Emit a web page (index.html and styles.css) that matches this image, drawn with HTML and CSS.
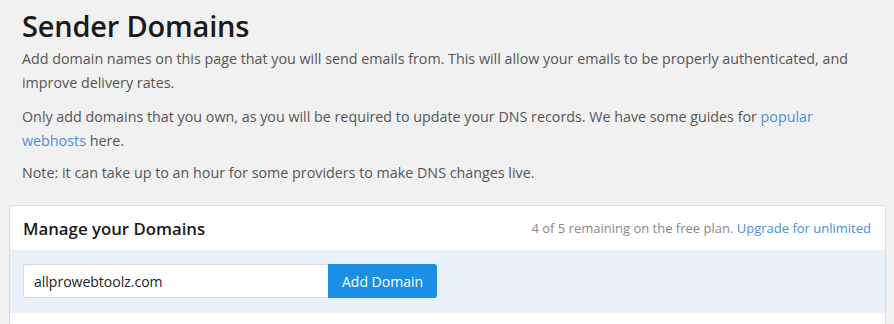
FILE: index.html
```html
<!DOCTYPE html>
<html>
<head>
<meta charset="utf-8">
<link rel="stylesheet" href="styles.css">
</head>
<body>
<div class="intro">
  <h1 class="title">Sender Domains</h1>
  <p class="text">Add domain names on this page that you will send emails from. This will allow your emails to be properly authenticated, and improve delivery rates.</p>
  <p class="text">Only add domains that you own, as you will be required to update your DNS records. We have some guides for <a class="link" href="#">popular webhosts</a> here.</p>
  <p class="text text-note">Note: it can take up to an hour for some providers to make DNS changes live.</p>
</div>
<div class="card">
  <div class="card-head">
    <h2 class="card-title">Manage your Domains</h2>
    <div class="quota">4 of 5 remaining on the free plan. <a class="link" href="#">Upgrade for unlimited</a></div>
  </div>
  <div class="card-form">
    <div class="field">
      <input class="input" type="text" value="allprowebtoolz.com">
      <button class="btn">Add Domain</button>
    </div>
  </div>
  <div class="card-rest"></div>
</div>
</body>
</html>
```
FILE: styles.css
```css
html, body {
  margin: 0;
  padding: 0;
}
body {
  background: #f1f1f1;
  font-family: "Open Sans", "DejaVu Sans", sans-serif;
  color: #555;
  padding: 0 8px 0 9px;
}
.intro {
  padding: 0 13px;
}
.title {
  margin: 0;
  padding-top: 6px;
  font-size: 29px;
  font-weight: 600;
  line-height: 40px;
  color: #1a1a1a;
  letter-spacing: -0.2px;
}
.text {
  margin: 0 0 10px;
  font-size: 14.3px;
  line-height: 24px;
  color: #555;
}
.text:first-of-type {
  margin-top: 1px;
}
.text-note {
  margin-top: -2px;
}
.link {
  color: #4a90d9;
  text-decoration: none;
}
.card {
  margin-top: 20px;
  background: #fff;
  border: 1px solid #dcdcdc;
  border-radius: 3px;
  overflow: hidden;
}
.card-head {
  display: flex;
  justify-content: space-between;
  align-items: center;
  height: 44px;
  padding: 0 14px 0 13px;
}
.card-title {
  margin: 0;
  font-size: 16.8px;
  font-weight: 600;
  color: #1a1a1a;
}
.quota {
  font-size: 13px;
  color: #888;
}
.card-form {
  background: #e9f2fb;
  padding: 14px 13px 15px;
}
.field {
  display: flex;
  height: 34px;
}
.input {
  box-sizing: border-box;
  width: 305px;
  height: 34px;
  margin: 0;
  border: 1px solid #d4dbe2;
  border-right: none;
  border-radius: 3px 0 0 3px;
  padding: 0 10px;
  font-family: "Open Sans", "DejaVu Sans", sans-serif;
  font-size: 14px;
  color: #222;
  background: #fff;
  outline: none;
}
.btn {
  box-sizing: border-box;
  width: 109px;
  height: 34px;
  margin: 0;
  border: none;
  border-radius: 0 3px 3px 0;
  background: #1a8fe3;
  color: #fff;
  font-family: "Open Sans", "DejaVu Sans", sans-serif;
  font-size: 14px;
  padding: 0;
}
.card-rest {
  height: 20px;
}
```
